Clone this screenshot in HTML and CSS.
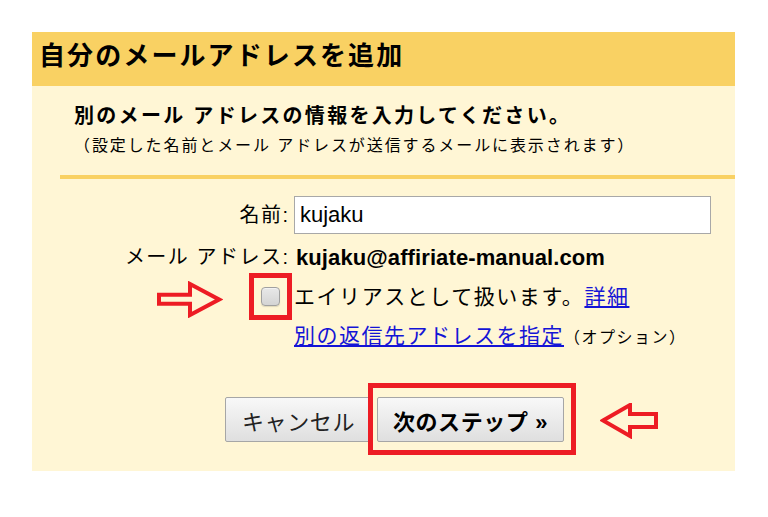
FILE: index.html
```html
<!DOCTYPE html>
<html lang="ja">
<head>
<meta charset="utf-8">
<title>自分のメールアドレスを追加</title>
<link rel="stylesheet" href="styles.css">
</head>
<body>
<div class="panel">
  <h1 class="title">自分のメールアドレスを追加</h1>
  <p class="lead">別のメール アドレスの情報を入力してください。</p>
  <p class="note">（設定した名前とメール アドレスが送信するメールに表示されます）</p>
  <div class="divider"></div>
  <div class="form">
    <label class="label" for="name">名前:</label>
    <input class="field" id="name" type="text" value="kujaku">
    <div class="label">メール アドレス:</div>
    <div class="value email">kujaku@affiriate-manual.com</div>
    <div class="label check-cell"><span class="checkbox framed"></span></div>
    <div class="value alias">エイリアスとして扱います。<a href="#" class="link">詳細</a></div>
    <div class="label"></div>
    <div class="value"><a href="#" class="link">別の返信先アドレスを指定</a><span class="option">（オプション）</span></div>
  </div>
  <div class="buttons">
    <button class="btn cancel" type="button">キャンセル</button>
    <span class="framed-btn"><button class="btn next" type="button">次のステップ »</button></span>
  </div>
  <svg class="arrow arrow-right" width="66" height="37" viewBox="0 0 66 37">
    <polygon points="2,13.7 33,13.7 33,3 62,18.5 33,34 33,22.7 2,22.7" fill="none" stroke="#ed1c24" stroke-width="4" stroke-linejoin="miter"/>
  </svg>
  <svg class="arrow arrow-left" width="59" height="36" viewBox="0 0 59 36">
    <polygon points="3,17.5 30,2 30,11 56,11 56,24 30,24 30,33" fill="none" stroke="#ed1c24" stroke-width="4" stroke-linejoin="miter"/>
  </svg>
</div>
</body>
</html>
```
FILE: styles.css
```css
* { box-sizing: border-box; }
html, body { margin: 0; padding: 0; background: #ffffff; }
body {
  font-family: "Liberation Sans", "Noto Sans CJK JP", sans-serif;
  color: #000;
}
.panel {
  position: relative;
  margin: 32px 0 0 32px;
  width: 703px;
  height: 439px;
  background: #fff6d5;
}
.title {
  margin: 0;
  height: 54px;
  padding-left: 7px;
  background: #f9d163;
  font-size: 26px;
  line-height: 48px;
  letter-spacing: 2.1px;
  font-weight: bold;
}
.lead {
  margin: 16px 0 0 0;
  padding-left: 42px;
  font-size: 20px;
  line-height: 28px;
  letter-spacing: 2.3px;
  font-weight: bold;
}
.note {
  margin: 2px 0 0 0;
  padding-left: 42px;
  font-size: 16px;
  line-height: 28px;
  letter-spacing: 1.9px;
}
.divider {
  margin: 15px 0 0 28px;
  height: 4px;
  background: #f9d163;
}
.form {
  margin-top: 17px;
  display: grid;
  grid-template-columns: 256px 1fr;
  column-gap: 6px;
  row-gap: 8px;
  align-items: center;
}
.label {
  text-align: right;
  font-size: 20px;
  line-height: 31px;
  letter-spacing: 1.5px;
  margin-right: -1.5px;
}
.value {
  font-size: 21px;
  line-height: 31px;
  letter-spacing: 0.4px;
}
.alias { letter-spacing: 1.55px; }
.field {
  width: 417px;
  height: 38px;
  margin: 0;
  padding: 0 5px;
  border: 1px solid #a8a8a8;
  background: #fff;
  font-family: "Liberation Sans", sans-serif;
  font-size: 22px;
  color: #000;
  outline: none;
}
.email {
  font-size: 22px;
  font-weight: bold;
  letter-spacing: 0.1px;
  padding-left: 2px;
}
.check-cell {
  display: flex;
  justify-content: flex-end;
  padding-right: 8px;
  margin-right: 0;
}
.checkbox {
  display: block;
  width: 19px;
  height: 19px;
  border: 1px solid #a0a0a0;
  border-radius: 4px;
  background: linear-gradient(#e8e8e8, #d4d4d4);
  box-shadow: inset 0 1px 0 #f2f2f2, 0 1px 1px rgba(0,0,0,0.12);
}
.framed { position: relative; }
.framed::after {
  content: "";
  position: absolute;
  top: -15px; bottom: -15px;
  left: -13px; right: -13px;
  border: 5px solid #ed1c24;
}
.link {
  color: #1414d6;
  text-decoration: underline;
  letter-spacing: 1.5px;
}
.option {
  font-size: 16px;
  letter-spacing: 1.5px;
}
.buttons {
  margin-top: 44px;
  padding-left: 193px;
  display: flex;
  gap: 5px;
}
.btn {
  height: 45px;
  margin: 0;
  padding: 0;
  border: 1px solid #a6a6a6;
  border-radius: 2px;
  background: linear-gradient(#f8f8f8, #dfdfdf);
  font-family: "Liberation Sans", "Noto Sans CJK JP", sans-serif;
  font-size: 22px;
  color: #222;
}
.cancel { width: 147px; letter-spacing: 0.6px; }
.next { width: 187px; font-weight: bold; color: #000; letter-spacing: 0.6px; }
.framed-btn { position: relative; display: block; }
.framed-btn::after {
  content: "";
  position: absolute;
  top: -14px; bottom: -13px;
  left: -9px; right: -12px;
  border: 5px solid #ed1c24;
}
.arrow { position: absolute; }
.arrow-right { left: 125px; top: 249px; }
.arrow-left { left: 568px; top: 371px; }
```
